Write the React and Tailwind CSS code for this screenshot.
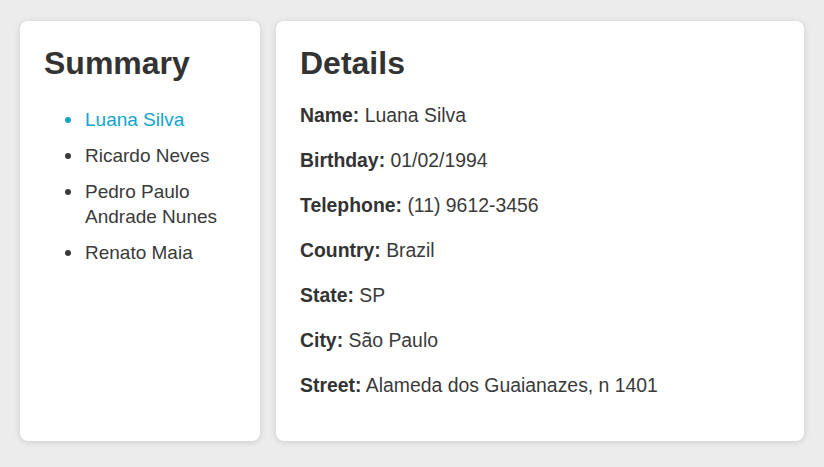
import React from 'react';

const people = ['Luana Silva', 'Ricardo Neves', 'Pedro Paulo Andrade Nunes', 'Renato Maia'];

const details = [
  ['Name', 'Luana Silva'],
  ['Birthday', '01/02/1994'],
  ['Telephone', '(11) 9612-3456'],
  ['Country', 'Brazil'],
  ['State', 'SP'],
  ['City', 'São Paulo'],
  ['Street', 'Alameda dos Guaianazes, n 1401'],
];

export default function App() {
  const selected = 0;

  return (
    <div
      className="flex h-[467px] gap-4 bg-[#ececec] px-5 pt-[21px] pb-[26px] text-[#333]"
      style={{ fontFamily: '"Liberation Sans", Arial, sans-serif' }}
    >
      {/* Summary */}
      <div className="w-[240px] shrink-0 rounded-lg bg-white p-6 shadow-[0_1px_6px_rgba(0,0,0,0.15)]">
        <h1 className="text-[32px] font-bold leading-[37px]">Summary</h1>
        <ul className="mt-[25px] pl-[21px]">
          {people.map((name, i) => (
            <li
              key={name}
              className={`mb-[11px] flex text-[19px] leading-[25px] ${i === selected ? 'text-[#12a5cc]' : 'text-[#3a3a3a]'}`}
            >
              <span className="mr-[14px] mt-[10px] h-[6px] w-[6px] shrink-0 rounded-full bg-current" />
              <span>{name}</span>
            </li>
          ))}
        </ul>
      </div>

      {/* Details */}
      <div className="flex-1 rounded-lg bg-white p-6 shadow-[0_1px_6px_rgba(0,0,0,0.15)]">
        <h1 className="text-[32px] font-bold leading-[37px]">Details</h1>
        <div className="mt-5">
          {details.map(([label, value]) => (
            <p key={label} className="mb-[18px] text-[19.4px] leading-[27px] text-[#3a3a3a]">
              <b className="font-bold text-[#333]">{label}:</b> {value}
            </p>
          ))}
        </div>
      </div>
    </div>
  );
}
